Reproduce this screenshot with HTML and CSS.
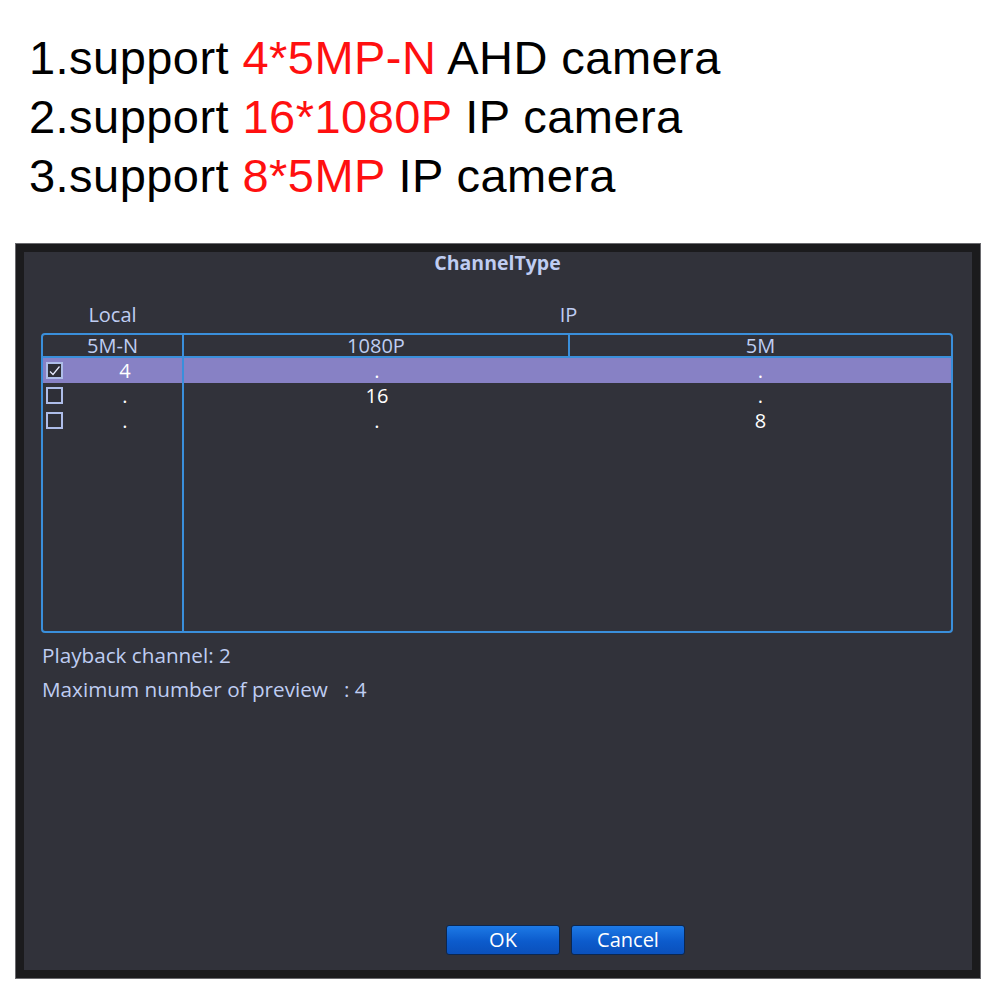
FILE: index.html
```html
<!DOCTYPE html>
<html>
<head>
<meta charset="utf-8">
<link rel="stylesheet" href="styles.css">
</head>
<body>
<div class="heading">
  <div class="line">1.support <span class="red">4*5MP-N</span> AHD camera</div>
  <div class="line">2.support <span class="red">16*1080P</span> IP camera</div>
  <div class="line">3.support <span class="red">8*5MP</span> IP camera</div>
</div>
<div class="dialog">
  <div class="panel">
    <div class="title">ChannelType</div>
    <div class="groups">
      <div class="group">Local</div>
      <div class="group">IP</div>
    </div>
    <div class="table">
      <div class="thead">
        <div class="th">5M-N</div>
        <div class="th">1080P</div>
        <div class="th">5M</div>
      </div>
      <div class="tbody">
        <div class="local">
          <div class="lrow sel"><span class="cb checked"><svg viewBox="0 0 13 13" width="13" height="13"><path d="M2 7.5 L5 10.5 L11.5 2.5" fill="none" stroke="#e8ecff" stroke-width="1.2"/></svg></span><span class="num">4</span></div>
          <div class="lrow"><span class="cb"></span><span class="num">.</span></div>
          <div class="lrow"><span class="cb"></span><span class="num">.</span></div>
        </div>
        <div class="ip">
          <div class="irow sel"><span>.</span><span>.</span></div>
          <div class="irow"><span>16</span><span>.</span></div>
          <div class="irow"><span>.</span><span>8</span></div>
        </div>
      </div>
    </div>
    <div class="info first">Playback channel: 2</div>
    <div class="info">Maximum number of preview &nbsp; : 4</div>
    <div class="buttons">
      <button class="btn">OK</button>
      <button class="btn">Cancel</button>
    </div>
  </div>
</div>
</body>
</html>
```
FILE: styles.css
```css
html, body {
  margin: 0;
  padding: 0;
  background: #ffffff;
}
body {
  width: 1000px;
  height: 1000px;
  overflow: hidden;
}
.heading {
  padding: 28px 0 0 29px;
  font-family: "Liberation Sans", Arial, sans-serif;
  font-size: 47px;
  line-height: 59px;
  letter-spacing: 0.45px;
  color: #000;
}
.red {
  color: #ff1010;
}
.dialog {
  margin: 39px 0 0 16px;
  width: 964px;
  height: 734px;
  box-sizing: border-box;
  border: 8px solid #1b1b1d;
  background: #31323a;
  box-shadow: 0 0 0 1px #6a6a6e;
}
.panel {
  height: 100%;
  display: flex;
  flex-direction: column;
  font-family: "Open Sans", "Noto Sans", sans-serif;
  color: #bfcdf2;
  font-size: 20px;
}
.title {
  text-align: center;
  font-weight: 700;
  font-size: 19.5px;
  line-height: 20px;
  margin-top: 1px;
  padding-right: 1px;
}
.groups {
  display: grid;
  grid-template-columns: 143px 1fr;
  margin: 30px 19px 0 17px;
  line-height: 24px;
}
.group {
  text-align: center;
}
.table {
  margin: 6px 19px 0 17px;
  height: 300px;
  box-sizing: border-box;
  border: 2px solid #3a8fdb;
  border-radius: 4px;
  display: flex;
  flex-direction: column;
}
.thead {
  display: grid;
  grid-template-columns: 141px 386px 1fr;
  height: 23px;
  box-sizing: border-box;
  border-bottom: 2px solid #3a8fdb;
  line-height: 22px;
}
.th {
  text-align: center;
  border-right: 2px solid #3a8fdb;
}
.th:last-child {
  border-right: none;
}
.tbody {
  flex: 1;
  display: flex;
}
.local {
  width: 141px;
  box-sizing: border-box;
  border-right: 2px solid #3a8fdb;
}
.ip {
  flex: 1;
}
.lrow, .irow {
  height: 25px;
  color: #ffffff;
  font-size: 20px;
  line-height: 25px;
}
.lrow {
  display: flex;
  align-items: center;
}
.irow {
  display: grid;
  grid-template-columns: 386px 1fr;
  text-align: center;
}
.sel {
  background: #8781c5;
}
.cb {
  width: 17px;
  height: 17px;
  box-sizing: border-box;
  border: 2px solid #aebde9;
  background: #2e2f37;
  margin-left: 3px;
  display: flex;
  align-items: center;
  justify-content: center;
}
.num {
  flex: 1;
  text-align: center;
  padding-left: 5px;
}
.info {
  margin-left: 18px;
  font-size: 20.7px;
  line-height: 34px;
}
.info.first {
  margin-top: 5px;
}
.buttons {
  margin-top: auto;
  margin-bottom: 15px;
  padding-left: 422px;
  display: flex;
  gap: 11px;
}
.btn {
  width: 114px;
  height: 30px;
  box-sizing: border-box;
  border: 1px solid #0b2750;
  border-radius: 3px;
  background: linear-gradient(#1d7ae6, #0c5bcc 55%, #0a50bb);
  color: #ffffff;
  font-family: "Open Sans", "Noto Sans", sans-serif;
  font-size: 20px;
  line-height: 26px;
  padding: 0;
}
```
